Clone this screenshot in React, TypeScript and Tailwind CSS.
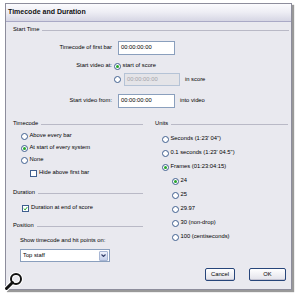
import type { ReactNode } from 'react';

const font = { fontFamily: '"Liberation Sans", Arial, sans-serif' };

function GroupHeader({ label, className = '' }: { label: string; className?: string }) {
    return (
        <div className={`flex h-[8px] items-center gap-[3px] ${className}`}>
            <span className="leading-none">{label}</span>
            <div className="h-px flex-1 bg-[#b9b9c6]" />
        </div>
    );
}

function Radio({ checked = false, disabled = false }: { checked?: boolean; disabled?: boolean }) {
    return (
        <span
            className={`grid h-[7px] w-[7px] shrink-0 place-items-center rounded-full border ${
                disabled ? 'border-[#9ab0cc] bg-[#f4f4f4]' : 'border-[#3f5f8f] bg-white'
            }`}
        >
            {checked ? <span className="h-[3px] w-[3px] rounded-full bg-[#25a52a]" /> : null}
        </span>
    );
}

function RadioRow({ checked, children, className = '' }: { checked?: boolean; children: ReactNode; className?: string }) {
    return (
        <div className={`flex h-[10px] items-center gap-[1.5px] ${className}`}>
            <Radio checked={checked} />
            <span className="leading-none">{children}</span>
        </div>
    );
}

function Checkbox({ checked = false }: { checked?: boolean }) {
    return (
        <span className="grid h-[7px] w-[7px] shrink-0 place-items-center border border-[#3f5f8f] bg-white">
            {checked ? (
                <svg viewBox="0 0 7 7" className="h-[5px] w-[5px]">
                    <path d="M1 3.5 L3 5.5 L6 1.5" fill="none" stroke="#25a52a" strokeWidth="1.4" />
                </svg>
            ) : null}
        </span>
    );
}

function TextBox({ value, disabled = false, className = '' }: { value: string; disabled?: boolean; className?: string }) {
    return (
        <div
            className={`flex items-center border px-[2px] leading-none ${
                disabled ? 'border-[#b5c3d6] bg-[#e4e4e8] text-[#a3a3a8]' : 'border-[#8a9fbd] bg-white text-black'
            } ${className}`}
        >
            {value}
        </div>
    );
}

function Button({ label, className = '' }: { label: string; className?: string }) {
    return (
        <div
            className={`grid h-[13px] place-items-center rounded-[2px] border border-[#27457a] bg-gradient-to-b from-white to-[#e2e2ea] leading-none shadow-[inset_0_-1px_0_#c4c4d2] ${className}`}
        >
            {label}
        </div>
    );
}

export default function App() {
    return (
        <div className="relative h-[298px] w-[300px] overflow-hidden bg-white text-[5.8px] text-black" style={font}>
            <div className="ml-[5px] mt-[3px] flex h-[287px] w-[287px] flex-col border border-[#8d8d9c] bg-[#e9e9ef] shadow-[2px_2px_1px_rgba(0,0,0,0.4)]">
                <div className="flex h-[18px] items-center border-b border-[#a9a9c6] bg-gradient-to-b from-[#fbfbfe] via-[#ededf4] to-[#d6d6e4] pl-[2px] text-[7px] font-bold text-[#111]">
                    Timecode and Duration
                </div>

                <div className="flex flex-1 flex-col pl-[7px] pr-[2px]">
                    <GroupHeader label="Start Time" className="mt-[4px]" />

                    <div className="mt-[7px] flex h-[14px] items-center gap-[6px]">
                        <span className="w-[99px] text-right leading-none">Timecode of first bar</span>
                        <TextBox value="00:00:00:00" className="h-[14px] w-[57px]" />
                    </div>

                    <div className="mt-[6px] flex h-[10px] items-center gap-[6px]">
                        <span className="w-[99px] text-right leading-none">Start video at:</span>
                        <div className="-ml-[4px] flex items-center gap-[1.5px]">
                            <Radio checked />
                            <span className="leading-none">start of score</span>
                        </div>
                    </div>

                    <div className="mt-[2px] flex h-[13px] items-center gap-[6px]">
                        <span className="w-[99px]" />
                        <div className="-ml-[4px] flex items-center gap-[3px]">
                            <Radio />
                            <TextBox value="00:00:00:00" disabled className="h-[13px] w-[56px]" />
                            <span className="ml-[2px] leading-none">in score</span>
                        </div>
                    </div>

                    <div className="mt-[8px] flex h-[14px] items-center gap-[6px]">
                        <span className="w-[99px] text-right leading-none">Start video from:</span>
                        <TextBox value="00:00:00:00" className="h-[14px] w-[57px]" />
                        <span className="-ml-[1px] leading-none">into video</span>
                    </div>

                    <div className="mt-[12px] flex gap-[12px]">
                        <div className="flex w-[130px] flex-col">
                            <GroupHeader label="Timecode" />
                            <div className="ml-[8px] mt-[3px] flex flex-col gap-[2px]">
                                <RadioRow>Above every bar</RadioRow>
                                <RadioRow checked>At start of every system</RadioRow>
                                <RadioRow>None</RadioRow>
                            </div>
                            <div className="ml-[17px] mt-[3px] flex h-[10px] items-center gap-[2px]">
                                <Checkbox />
                                <span className="leading-none">Hide above first bar</span>
                            </div>

                            <GroupHeader label="Duration" className="mt-[11px]" />
                            <div className="ml-[9px] mt-[6px] flex h-[10px] items-center gap-[2px]">
                                <Checkbox checked />
                                <span className="leading-none">Duration at end of score</span>
                            </div>

                            <GroupHeader label="Position" className="mt-[9px]" />
                            <div className="ml-[7px] mt-[7px] flex h-[8px] items-center leading-none">
                                Show timecode and hit points on:
                            </div>
                            <div className="ml-[7px] mt-[4px] flex h-[13px] w-[90px] items-center border border-[#8a9fbd] bg-white pl-[2px]">
                                <span className="flex-1 leading-none">Top staff</span>
                                <span className="mr-[1px] grid h-[10px] w-[9px] place-items-center rounded-[1px] border border-[#a7b6d4] bg-gradient-to-b from-[#eef1fb] to-[#c5d0ea]">
                                    <svg viewBox="0 0 5 3" className="h-[3px] w-[5px]">
                                        <path d="M0.5 0.5 L2.5 2.5 L4.5 0.5" fill="none" stroke="#34406a" strokeWidth="1.1" />
                                    </svg>
                                </span>
                            </div>
                        </div>

                        <div className="flex flex-1 flex-col pr-[1px]">
                            <GroupHeader label="Units" />
                            <div className="ml-[7px] mt-[6px] flex flex-col gap-[4px]">
                                <RadioRow>Seconds (1:23' 04")</RadioRow>
                                <RadioRow>0.1 seconds (1:23' 04.5")</RadioRow>
                                <RadioRow checked>Frames (01:23:04:15)</RadioRow>
                            </div>
                            <div className="ml-[17px] mt-[4px] flex flex-col gap-[4px]">
                                <RadioRow checked>24</RadioRow>
                                <RadioRow>25</RadioRow>
                                <RadioRow>29.97</RadioRow>
                                <RadioRow>30 (non-drop)</RadioRow>
                                <RadioRow>100 (centiseconds)</RadioRow>
                            </div>
                        </div>
                    </div>

                    <div className="mt-auto mb-[8px] flex justify-end gap-[14px] pr-[3px]">
                        <Button label="Cancel" className="w-[30px]" />
                        <Button label="OK" className="w-[37px]" />
                    </div>
                </div>
            </div>

            <svg viewBox="0 0 22 22" className="absolute left-[3px] top-[271px] h-[22px] w-[22px]">
                <circle cx="13" cy="8" r="5" fill="none" stroke="#fff" strokeWidth="4" />
                <path d="M9.5 11.5 L3 18" stroke="#fff" strokeWidth="5" strokeLinecap="round" />
                <circle cx="13" cy="8" r="5" fill="none" stroke="#111" strokeWidth="2" />
                <path d="M9.5 11.5 L3.5 17.5" stroke="#111" strokeWidth="3" strokeLinecap="round" />
            </svg>
        </div>
    );
}
